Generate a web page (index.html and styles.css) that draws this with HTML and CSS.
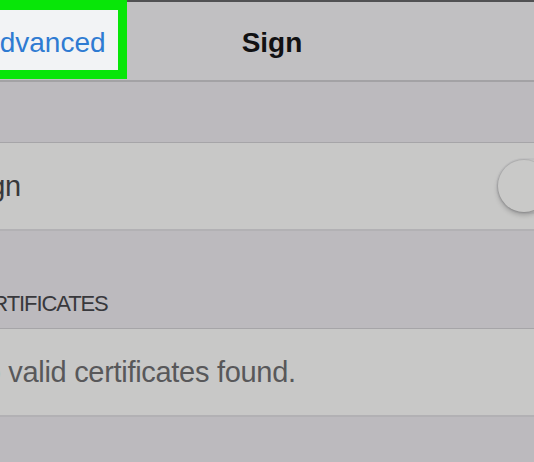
FILE: index.html
```html
<!DOCTYPE html>
<html>
<head>
<meta charset="utf-8">
<link rel="stylesheet" href="styles.css">
</head>
<body>
<div class="screen">
  <header class="nav">
    <div class="nav-left">
      <button class="back">Advanced</button>
    </div>
    <h1 class="title">Sign</h1>
    <div class="nav-right"></div>
  </header>

  <section class="group first">
    <div class="cell">
      <span class="cell-text dark">Sign</span>
      <span class="switch"><span class="knob"></span></span>
    </div>
  </section>

  <section class="group">
    <h2 class="group-label">CERTIFICATES</h2>
    <div class="cell">
      <span class="cell-text muted">No valid certificates found.</span>
    </div>
  </section>
</div>
</body>
</html>
```

FILE: styles.css
```css
html, body {
  margin: 0;
  padding: 0;
}
body {
  width: 534px;
  height: 462px;
  overflow: hidden;
  background: #bcbabe;
  font-family: "Liberation Sans", Arial, sans-serif;
}
.screen {
  width: 616px;
  margin-left: -36px;
}
.nav {
  height: 80px;
  display: grid;
  grid-template-columns: 1fr auto 1fr;
  align-items: start;
  background: linear-gradient(#515153 0 2px, #c1c0c2 2px);
  border-bottom: 2px solid #a3a2a5;
}
.nav-left {
  display: flex;
}
.back {
  box-sizing: border-box;
  height: 79px;
  margin: 0;
  padding: 6px 12px 0 8px;
  border: 9px solid #08e608;
  border-top-width: 10px;
  background: #f2f3f5;
  color: #2f7bd2;
  font-family: "Liberation Sans", Arial, sans-serif;
  font-size: 28px;
  line-height: 28px;
  text-align: left;
}
.title {
  margin: 0;
  align-self: center;
  font-size: 28px;
  font-weight: bold;
  color: #111113;
  line-height: 28px;
  padding-top: 6px;
}
.group.first {
  margin-top: 60px;
}
.group-label {
  margin: 0;
  padding: 60px 0 12px 0;
  font-size: 22px;
  line-height: 25px;
  font-weight: normal;
  letter-spacing: -1.1px;
  color: #38383c;
}
.cell {
  height: 86px;
  display: flex;
  align-items: center;
  justify-content: space-between;
  background: #c8c8c7;
  border-top: 1px solid #a6a5a8;
  border-bottom: 2px solid #b2b1b4;
}
.cell-text {
  font-size: 29px;
  line-height: 29px;
  letter-spacing: -0.3px;
}
.cell-text.dark {
  color: #38383a;
}
.cell-text.muted {
  color: #58585a;
}
.switch {
  width: 84px;
  height: 56px;
  box-sizing: border-box;
  border-radius: 28px;
  border: 2px solid #c0c0c1;
  display: flex;
  align-items: center;
}
.knob {
  width: 52px;
  height: 52px;
  border-radius: 50%;
  background: #c9c9c8;
  box-shadow: 0 3px 5px rgba(0, 0, 0, 0.22), 0 0 0 1px rgba(0, 0, 0, 0.08);
}
```
